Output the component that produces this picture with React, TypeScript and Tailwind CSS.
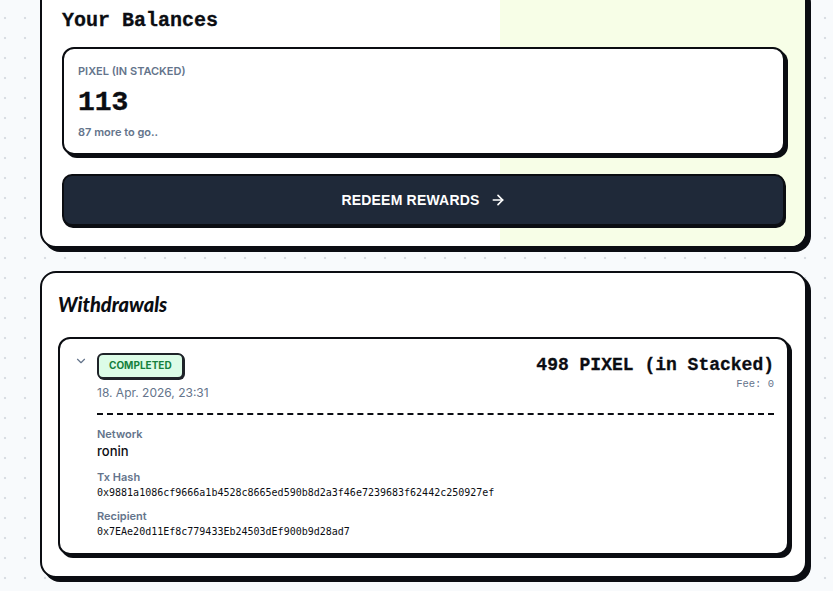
import React from 'react';
import { ChevronDown, ArrowRight } from 'lucide-react';

const withdrawal = {
  status: 'COMPLETED',
  date: '18. Apr. 2026, 23:31',
  amount: '498 PIXEL (in Stacked)',
  fee: 'Fee: 0',
  network: 'ronin',
  txHash: '0x9881a1086cf9666a1b4528c8665ed590b8d2a3f46e7239683f62442c250927ef',
  recipient: '0x7EAe20d11Ef8c779433Eb24503dEf900b9d28ad7',
};

const mono = "font-['Liberation_Mono',monospace]";
const sans = "font-['Inter',sans-serif]";

const App = () => {
  return (
    <main className={`${sans} min-h-screen w-full bg-[#f8fafc] bg-[radial-gradient(circle_at_5px_18px,#d9dde3_1px,transparent_1.6px)] bg-size-[20px_20px] pl-10 pr-[26px] pb-10 overflow-hidden`}>
      {/* balances */}
      <section className="relative mt-[-17px] w-[767px] rounded-2xl border-2 border-[#0b0d12] bg-white shadow-[4px_4px_0_0_#0b0d12] overflow-hidden">
        <div className="absolute right-0 top-0 bottom-0 w-2/5 bg-[#f7fee7]" />
        <div className="relative p-5">
          <h2 className={`${mono} pt-0.5 text-[20px] leading-7 font-bold text-[#0b0d12] [-webkit-text-stroke:0.3px_#0b0d12]`}>Your Balances</h2>
          <div className="mt-3 rounded-xl border-2 border-[#0b0d12] bg-white px-[14px] pt-[14px] pb-[13px] shadow-[3px_3px_0_0_#0b0d12]">
            <p className="text-[11px] leading-4 font-semibold text-[#64748b] uppercase">PIXEL (in Stacked)</p>
            <p className={`${mono} mt-[6px] text-[28px] leading-9 font-bold text-[#0b0d12] [-webkit-text-stroke:0.4px_#0b0d12]`}>113</p>
            <p className="mt-[3px] text-[11px] leading-4 font-semibold text-[#64748b]">87 more to go..</p>
          </div>
          <button className="mt-[19px] flex h-[52px] w-full items-center justify-center gap-2.5 rounded-[10px] border-2 border-[#0b0d12] bg-[#1f2939] shadow-[1px_2px_0_0_#0b0d12] font-['Liberation_Sans',sans-serif] text-[14px] font-bold tracking-[0.2px] text-white">
            REDEEM REWARDS
            <ArrowRight size={16} strokeWidth={2.5} />
          </button>
        </div>
      </section>

      {/* withdrawals */}
      <section className="mt-[23px] w-[767px] rounded-2xl border-2 border-[#0b0d12] bg-white px-4 pt-4 pb-[21px] shadow-[4px_4px_0_0_#0b0d12]">
        <h2 className="font-['Lato',sans-serif] text-[20px] leading-[30px] font-black italic text-[#0b0d12]">Withdrawals</h2>
        <div className="mt-[18px] flex rounded-xl border-2 border-[#0b0d12] bg-white pl-[14px] pr-[13px] pt-3 pb-3.5 shadow-[3px_3px_0_0_#0b0d12]">
          <div className="w-[23px] pt-[3px]">
            <ChevronDown size={14} className="text-[#64748b]" strokeWidth={2} />
          </div>
          <div className="flex-1">
            <div className="flex items-start justify-between">
              <div>
                <span className="inline-flex h-[26px] items-center rounded-md border-2 border-[#1f2329] bg-[#dcfce7] px-[10px] text-[10px] font-bold text-[#15803d] shadow-[1px_1px_0_0_#1f2329]">
                  {withdrawal.status}
                </span>
                <p className="mt-1.5 text-[12px] leading-4 text-[#64748b]">{withdrawal.date}</p>
              </div>
              <div className="text-right pt-0.5">
                <p className={`${mono} text-[18px] leading-6 font-bold text-[#0b0d12] [-webkit-text-stroke:0.3px_#0b0d12]`}>{withdrawal.amount}</p>
                <p className={`${mono} -mt-px text-[10.5px] leading-4 text-[#64748b]`}>{withdrawal.fee}</p>
              </div>
            </div>
            <div className="mt-3 border-t-2 border-dashed border-[#0b0d12]" />
            <div className="mt-[11px]">
              <p className="text-[11px] leading-4 font-semibold text-[#64748b]">Network</p>
              <p className="text-[13px] leading-[18px] font-medium text-[#0b0d12]">{withdrawal.network}</p>
            </div>
            <div className="mt-[9px]">
              <p className="text-[11px] leading-4 font-semibold text-[#64748b]">Tx Hash</p>
              <p className="mt-px font-['DejaVu_Sans_Mono',monospace] text-[10px] leading-[14px] text-[#0b0d12]">{withdrawal.txHash}</p>
            </div>
            <div className="mt-2">
              <p className="text-[11px] leading-4 font-semibold text-[#64748b]">Recipient</p>
              <p className="mt-px font-['DejaVu_Sans_Mono',monospace] text-[10px] leading-[14px] text-[#0b0d12]">{withdrawal.recipient}</p>
            </div>
          </div>
        </div>
      </section>
    </main>
  );
};

export default App;
